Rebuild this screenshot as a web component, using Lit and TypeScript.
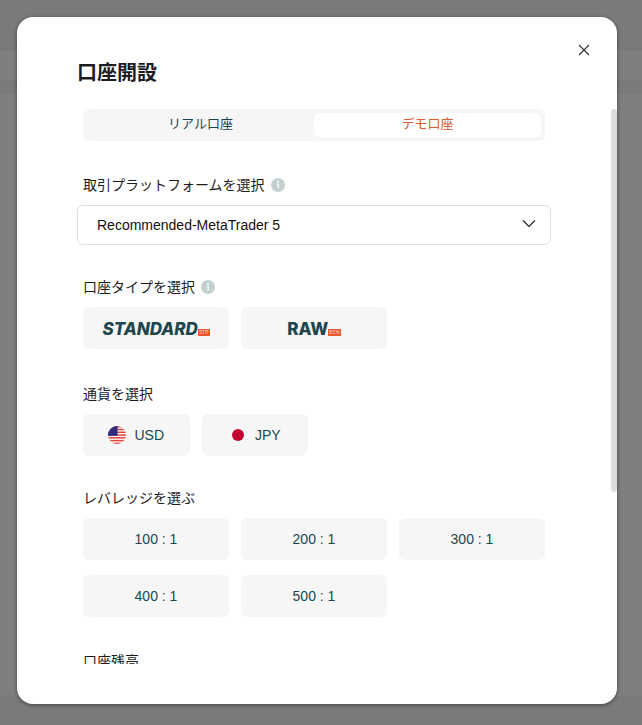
import { LitElement, html, css, svg } from "lit";
import { customElement, property, state } from "lit/decorators.js";
import { classMap } from "lit/directives/class-map.js";

const fontStack = css`"Liberation Sans", "Noto Sans CJK JP", sans-serif`;

@customElement("info-dot")
class InfoDot extends LitElement {
  static styles = css`
    :host { display: inline-flex; }
    svg { display: block; }
  `;
  render() {
    return html`<svg width="14" height="14" viewBox="0 0 14 14" aria-hidden="true">
      <circle cx="7" cy="7" r="7" fill="#c4cfcf" />
      <circle cx="7" cy="3.7" r="1" fill="#fff" />
      <path d="M6 6.1H7.2V10.6" fill="none" stroke="#fff" stroke-width="1.3" />
    </svg>`;
  }
}

@customElement("choice-button")
class ChoiceButton extends LitElement {
  static styles = css`
    :host { display: block; }
    .choice {
      width: 100%;
      height: 42px;
      border: 0;
      border-radius: 6px;
      padding: 0;
      background: #f6f6f7;
      color: #1a474f;
      font: 14px/20px ${fontStack};
      display: flex;
      align-items: center;
      justify-content: center;
      cursor: pointer;
    }
    .choice[aria-pressed="true"] { box-shadow: inset 0 0 0 1px #d9532c; }
  `;
  @property({ type: Boolean }) selected = false;
  render() {
    return html`<button class="choice" type="button" aria-pressed=${this.selected ? "true" : "false"}><slot></slot></button>`;
  }
}

const usFlag = html`<svg width="18" height="18" viewBox="0 0 18 18" aria-hidden="true">
  <defs><clipPath id="us-round"><circle cx="9" cy="9" r="9" /></clipPath></defs>
  <g clip-path="url(#us-round)">
    <rect width="18" height="18" fill="#fff" />
    ${[0, 1, 2, 3, 4, 5, 6].map((i) => svg`<rect y=${i * 2.77} width="18" height="1.5" fill="#e0433a" />`)}
    <rect width="9.5" height="9.7" fill="#29267d" />
    ${[1, 3, 5, 7].map((y) => svg`<path d="M1 ${y + 0.8}H9" stroke="#6c6bb0" stroke-width=".6" stroke-dasharray=".7 1.3" />`)}
  </g>
</svg>`;

const jpFlag = html`<svg width="18" height="18" viewBox="0 0 18 18" aria-hidden="true">
  <circle cx="9" cy="9" r="9" fill="#f8f8f8" />
  <circle cx="9" cy="9" r="6" fill="#c1082f" />
</svg>`;

@customElement("app-root")
class AppRoot extends LitElement {
  @state() private tab = "demo";
  @state() private account = "";
  @state() private currency = "";
  @state() private leverage = 0;

  static styles = css`
    :host {
      display: flex;
      box-sizing: border-box;
      height: 100vh;
      padding: 17px 25px 21px 17px;
      font: 14px/20px ${fontStack};
      color: #1c1c1e;
      background: linear-gradient(#7a7a7a 0 49px, #747474 49px 50px, #7f7f7f 50px 80px, #7a7a7a 80px 94px, #7f7f7f 94px calc(100% - 29px), #7a7a7a calc(100% - 29px));
    }
    .dialog {
      position: relative;
      flex: 1;
      min-width: 0;
      display: flex;
      flex-direction: column;
      padding-bottom: 40px;
      box-sizing: border-box;
      background: #fff;
      border-radius: 16px;
      box-shadow: 0 1px 4px rgba(0, 0, 0, 0.45);
    }
    .title {
      margin: 0;
      padding: 40px 60px 20px;
      font-size: 20px;
      line-height: 32px;
      font-weight: 700;
    }
    .close {
      position: absolute;
      top: 24px;
      right: 24px;
      width: 18px;
      height: 18px;
      padding: 0;
      border: 0;
      background: none;
      display: grid;
      place-items: center;
      cursor: pointer;
    }
    .viewport { position: relative; flex: 1; min-height: 0; display: flex; }
    .scroller {
      flex: 1;
      min-width: 0;
      overflow-y: auto;
      scrollbar-width: none;
      padding: 0 66px 0 60px;
    }
    .thumb {
      position: absolute;
      top: 0;
      right: 0;
      width: 6px;
      height: 69%;
      border-radius: 3px;
      background: #dedede;
    }
    .tabs {
      display: grid;
      grid-template-columns: 1fr 1fr;
      margin: 0 6px;
      padding: 4px;
      border-radius: 6px;
      background: #f6f6f7;
    }
    .tab {
      height: 24px;
      padding: 0 0 2px;
      border: 0;
      border-radius: 6px;
      background: none;
      color: #1a474f;
      font: 13px/20px ${fontStack};
      cursor: pointer;
    }
    .tab.active { background: #fff; color: #dc5a2b; }
    .group { margin-top: 34px; }
    .group.near { margin-top: 32px; }
    .group.far { margin-top: 35px; }
    .label { display: flex; align-items: center; gap: 6px; margin: 0 6px 10px; }
    .picker { position: relative; }
    .picker svg { position: absolute; top: 13px; right: 15px; pointer-events: none; }
    .field {
      display: block;
      width: 100%;
      height: 40px;
      box-sizing: border-box;
      appearance: none;
      border: 1px solid #dfdfdf;
      border-radius: 6px;
      padding: 0 19px;
      background: #fff;
      color: #111;
      font: 14px/20px ${fontStack};
    }
    .grid { display: grid; gap: 15px 12px; margin: 0 6px; }
    .thirds { grid-template-columns: repeat(3, 1fr); }
    .quarters { grid-template-columns: repeat(4, 1fr); }
    .brand {
      display: flex;
      align-items: flex-end;
      padding-top: 2px;
      color: #1f464d;
      font: 800 17px/14px Inter, sans-serif;
    }
    .brand.slanted { font-style: italic; }
    .tag {
      padding: 0 1px;
      background: #e8582c;
      color: #fbd9cc;
      font: 5px/7px Inter, sans-serif;
    }
    .money { display: flex; align-items: center; gap: 8px; }
    .last { padding-bottom: 170px; }
  `;

  private tabButton(id: string, text: string) {
    return html`<button
      class=${classMap({ tab: true, active: this.tab === id })}
      type="button"
      role="tab"
      aria-selected=${this.tab === id ? "true" : "false"}
      @click=${() => (this.tab = id)}
    >${text}</button>`;
  }

  private accountButton(name: string, tag: string, slanted: boolean) {
    return html`<choice-button ?selected=${this.account === name} @click=${() => (this.account = name)}>
      <span class=${classMap({ brand: true, slanted })}>${name}<span class="tag">${tag}</span></span>
    </choice-button>`;
  }

  private currencyButton(code: string, flag: unknown) {
    return html`<choice-button ?selected=${this.currency === code} @click=${() => (this.currency = code)}>
      <span class="money">${flag}${code}</span>
    </choice-button>`;
  }

  render() {
    return html`
      <section class="dialog" role="dialog" aria-labelledby="title">
        <h1 class="title" id="title">口座開設</h1>
        <button class="close" type="button">
          <svg width="12" height="12" viewBox="0 0 12 12" aria-hidden="true">
            <path d="M1 1L11 11M11 1L1 11" stroke="#333" stroke-width="1.1" />
          </svg>
        </button>
        <div class="viewport">
          <div class="scroller">
            <div class="tabs" role="tablist">
              ${this.tabButton("real", "リアル口座")}${this.tabButton("demo", "デモ口座")}
            </div>

            <div class="group">
              <label class="label" for="platform">取引プラットフォームを選択<info-dot></info-dot></label>
              <div class="picker">
                <select class="field" id="platform">
                  <option>Recommended-MetaTrader 5</option>
                </select>
                <svg width="14" height="12" viewBox="0 0 14 12" aria-hidden="true">
                  <path d="M1 2.5L7 8.5L13 2.5" fill="none" stroke="#222" stroke-width="1.2" />
                </svg>
              </div>
            </div>

            <div class="group near" role="group" aria-labelledby="account">
              <div class="label" id="account">口座タイプを選択<info-dot></info-dot></div>
              <div class="grid thirds">
                ${this.accountButton("STANDARD", "STP", true)}${this.accountButton("RAW", "ECN", false)}
              </div>
            </div>

            <div class="group far" role="group" aria-labelledby="currency">
              <div class="label" id="currency">通貨を選択</div>
              <div class="grid quarters">
                ${this.currencyButton("USD", usFlag)}${this.currencyButton("JPY", jpFlag)}
              </div>
            </div>

            <div class="group near" role="group" aria-labelledby="leverage">
              <div class="label" id="leverage">レバレッジを選ぶ</div>
              <div class="grid thirds">
                ${[100, 200, 300, 400, 500].map(
                  (n) => html`<choice-button ?selected=${this.leverage === n} @click=${() => (this.leverage = n)}>${n} : 1</choice-button>`
                )}
              </div>
            </div>

            <div class="group last">
              <label class="label" for="balance">口座残高</label>
              <input class="field" id="balance" inputmode="numeric" />
            </div>
          </div>
          <div class="thumb"></div>
        </div>
      </section>
    `;
  }
}
